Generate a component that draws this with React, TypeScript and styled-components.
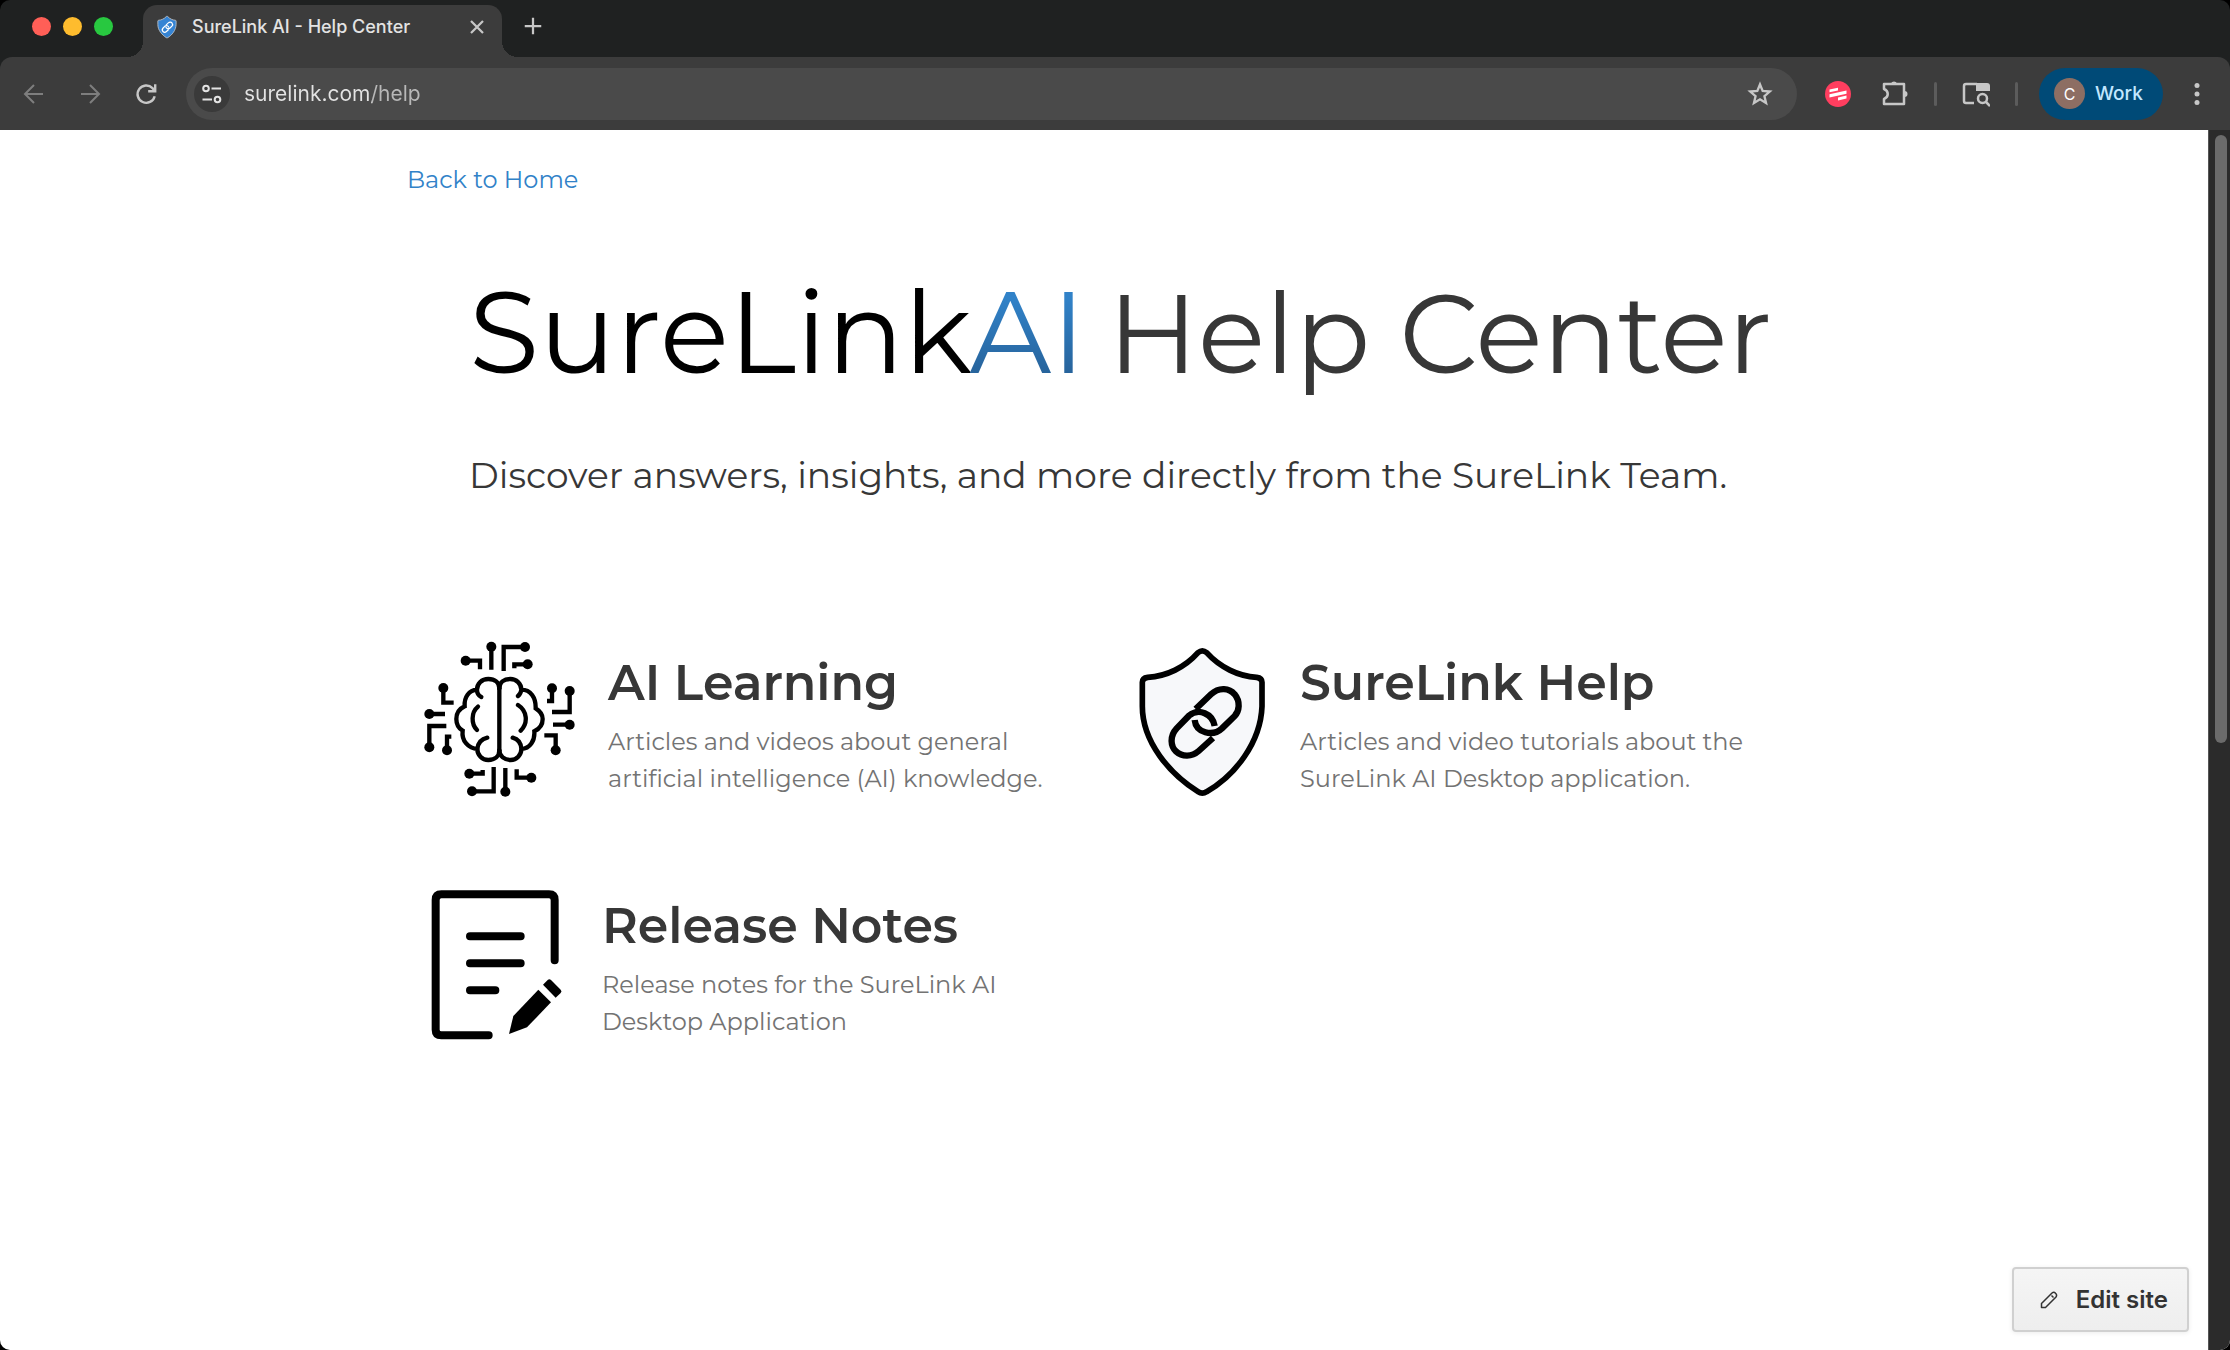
import React from "react";
import styled, { createGlobalStyle } from "styled-components";

const GlobalStyle = createGlobalStyle`
  *, *::before, *::after { box-sizing: border-box; }
  body { margin: 0; background: #000; font-family: Montserrat, Inter, "Liberation Sans", sans-serif; }
  button, input { font: inherit; }
`;

const Window = styled.div`
  display: flex;
  flex-direction: column;
  min-height: 100vh;
  border-radius: 10px;
  overflow: hidden;
  background: #1f2121;
`;

const TabStrip = styled.header`
  display: flex;
  align-items: flex-end;
  height: 57px;
  padding-left: 32px;
`;

const Lights = styled.div`
  display: flex;
  gap: 12px;
  width: 111px;
  height: 52px;
  padding-top: 12px;
`;

const Light = styled.button<{ $color: string }>`
  width: 19px;
  height: 19px;
  padding: 0;
  border: 0;
  border-radius: 50%;
  background: ${(p) => p.$color};
`;

const Tab = styled.div`
  position: relative;
  display: flex;
  align-items: center;
  width: 359px;
  height: 52px;
  padding: 0 12px 8px 14px;
  border-radius: 14px 14px 0 0;
  background: #3c3c3c;
  color: #e3e3e3;
  font: 500 18px/24px Inter, sans-serif;

  &::before,
  &::after {
    content: "";
    position: absolute;
    bottom: 0;
    width: 16px;
    height: 16px;
  }
  &::before {
    right: 100%;
    background: radial-gradient(circle at 0 0, transparent 16px, #3c3c3c 16px);
  }
  &::after {
    left: 100%;
    background: radial-gradient(circle at 100% 0, transparent 16px, #3c3c3c 16px);
  }
`;

const TabTitle = styled.span`
  flex: 1;
  margin-left: 15px;
  white-space: nowrap;
`;

const IconButton = styled.button<{ $size?: number; $dim?: boolean }>`
  display: flex;
  flex: none;
  align-items: center;
  justify-content: center;
  width: ${(p) => p.$size ?? 36}px;
  height: ${(p) => p.$size ?? 36}px;
  padding: 0;
  border: 0;
  border-radius: 50%;
  background: none;
  color: ${(p) => (p.$dim ? "#7e7e7e" : "#c7c7c7")};
`;

const NewTab = styled.div`
  display: flex;
  height: 52px;
  padding: 3px 0 0 13px;
`;

const Toolbar = styled.div`
  display: flex;
  align-items: center;
  height: 73px;
  padding: 0 15px 0 16px;
  border-radius: 12px 12px 0 0;
  background: #3c3c3c;
`;

const NavGroup = styled.nav`
  display: flex;
  gap: 20px;
  margin-right: 22px;
`;

const Address = styled.div`
  display: flex;
  flex: 1;
  align-items: center;
  height: 52px;
  padding: 0 19px 0 8px;
  border-radius: 26px;
  background: #4a4a4a;
`;

const SiteInfo = styled(IconButton)`
  background: #3a3a3a;
  color: #e3e3e3;
`;

const Url = styled.input`
  flex: 1;
  min-width: 0;
  margin-left: 14px;
  padding: 0;
  border: 0;
  outline: 0;
  color: #e3e3e3;
  background: linear-gradient(to right, #e3e3e3 128px, #b8b8b8 128px);
  background-clip: text;
  -webkit-background-clip: text;
  -webkit-text-fill-color: transparent;
  font: 400 21px/28px Inter, sans-serif;
`;

const Tools = styled.div`
  display: flex;
  align-items: center;
  gap: 21px;
  margin: 0 21px 0 23px;
`;

const Divider = styled.span`
  width: 3px;
  height: 24px;
  border-radius: 2px;
  background: #5c5c5c;
`;

const ProfileGroup = styled.div`
  display: flex;
  align-items: center;
  gap: 16px;
`;

const Profile = styled.button`
  display: flex;
  align-items: center;
  gap: 10px;
  width: 124px;
  height: 52px;
  padding: 0 0 0 15px;
  border: 0;
  border-radius: 26px;
  background: #004a77;
  color: #c2e7ff;
  font: 500 19px/24px Inter, sans-serif;
`;

const Avatar = styled.span`
  display: flex;
  align-items: center;
  justify-content: center;
  width: 31px;
  height: 31px;
  border-radius: 50%;
  background: #8d6e63;
  color: #fff;
  font-size: 16px;
  font-weight: 400;
`;

const Viewport = styled.div`
  display: flex;
  flex: 1;
  background: #fff;
`;

const Page = styled.main`
  position: relative;
  flex: 1;
`;

const Content = styled.div`
  width: 100%;
  max-width: 1394px;
  margin: 0 auto;
  padding-top: 32px;
`;

const BackLink = styled.a`
  display: inline-block;
  color: #3182c8;
  font-size: 24px;
  line-height: 36px;
  text-decoration: none;
`;

const Hero = styled.section`
  padding: 65px 0 0 62px;
  color: #373737;
  white-space: nowrap;
`;

const Title = styled.h1`
  display: flex;
  align-items: baseline;
  gap: 22px;
  margin: 0;
  font-size: 111px;
  font-weight: 400;
  line-height: 140px;
`;

const Brand = styled.span`
  color: #000;
  font-size: 114px;
`;

const BrandAccent = styled.span`
  background: linear-gradient(#3182c8 25%, #27639b 80%);
  background-clip: text;
  -webkit-background-clip: text;
  color: transparent;
`;

const Subtitle = styled.p`
  margin: 45px 0 0;
  font-size: 36px;
  line-height: 52px;
`;

const Cards = styled.section`
  display: grid;
  grid-template-columns: 1fr 1fr;
  row-gap: 43px;
  padding-top: 118px;
`;

const Card = styled.a`
  display: flex;
  align-items: center;
  gap: 8px;
  color: #737373;
  text-decoration: none;
`;

const CardBody = styled.div`
  padding-top: 12px;
`;

const CardTitle = styled.h2`
  margin: 0 0 10px;
  color: #373737;
  font-size: 49px;
  font-weight: 600;
  line-height: 60px;
`;

const CardText = styled.p`
  margin: 0;
  font-size: 24px;
  line-height: 37px;
`;

const ScrollTrack = styled.div`
  width: 22px;
  padding: 5px 4px 0 6px;
  border-left: 1px solid #555;
  background: #2b2b2b;
`;

const ScrollThumb = styled.div`
  width: 12px;
  height: 50%;
  border-radius: 6px;
  background: #6b6b6b;
`;

const EditButton = styled.button`
  position: absolute;
  right: 19px;
  bottom: 18px;
  display: flex;
  align-items: center;
  gap: 18px;
  height: 65px;
  padding: 0 19px 0 26px;
  border: 2px solid #d0d0d0;
  border-radius: 4px;
  background: linear-gradient(#f5f5f5, #eee);
  box-shadow: 0 1px 5px rgba(0, 0, 0, 0.08);
  color: #333;
  font: 600 24px/32px Inter, sans-serif;
`;

const Line = ({ size, d, width = 2 }: { size: number; d: string; width?: number }) => (
  <svg width={size} height={size} viewBox="0 0 24 24" fill="none" stroke="currentColor" strokeWidth={width} aria-hidden>
    <path d={d} />
  </svg>
);

const SHIELD =
  "M264 101Q277 90 290 101C330 145 385 172 440 175Q456 177 456 190V262C452 370 375 470 290 518Q277 527 264 518C180 465 97 370 97 262V190Q97 177 113 175C170 172 225 145 264 101Z";
const CHAIN =
  "M257 270L303 226C328 203 358 208 374 226C392 248 388 276 374 291L336 328C308 354 258 342 254 303M314 321C308 284 266 266 237 290L200 328C178 352 182 382 198 397C216 414 246 414 266 396L309 357";

const Favicon = () => (
  <svg width="20" height="24" viewBox="80 80 394 456" aria-hidden>
    <path d={SHIELD} fill="#3584d4" stroke="#b9bec4" strokeWidth="18" />
    <path d={CHAIN} fill="none" stroke="#fff" strokeWidth="24" />
  </svg>
);

const ShieldArt = () => (
  <svg width="188" height="200" viewBox="-18 0 564 600" aria-hidden>
    <path d={SHIELD} fill="#f7f8fa" stroke="#000" strokeWidth="17" />
    <path d={CHAIN} fill="none" stroke="#000" strokeWidth="19" />
  </svg>
);

const TRACES =
  "M197 125H240V151M274 83V152M375 84H311V156M383 136H343V148M130 207V251H161M88 285H135M88 385V321H139M141 394V353H154M456 208V246H441M509 216V279H456M509 317H459M467 394V349H433M208 464H248V453M216 517H281V444M316 518V447M394 476H350V451";
const NODES = [
  [197, 125], [274, 83], [375, 84], [383, 136], [130, 207], [88, 285], [88, 385], [141, 394],
  [456, 208], [509, 216], [509, 317], [467, 394], [208, 464], [216, 517], [316, 518], [394, 476],
];

const BrainArt = () => (
  <svg width="193" height="200" viewBox="21 0 579 600" fill="none" stroke="#000" aria-hidden>
    <path d={TRACES} strokeWidth="13" />
    {NODES.map(([x, y]) => (
      <circle key={`${x}-${y}`} cx={x} cy={y} r="15" fill="#000" stroke="none" />
    ))}
    <g strokeWidth="13" strokeLinecap="round">
      <path d="M298 208V394" />
      <path d="M298 208C298 190 284 180 265 180C245 180 231 194 231 212C231 222 236 230 244 234M231 212C207 214 192 234 194 262C177 270 169 285 169 300C169 316 176 328 188 335C184 365 205 389 233 390M298 394C298 412 284 423 265 423C246 423 232 408 232 390C234 372 244 360 262 356M234 263C213 280 213 315 231 333" />
      <path d="M298 208C298 190 312 180 331 180C349 180 364 194 364 212C363 220 360 226 354 231M364 212C392 212 408 236 407 268C420 276 428 287 428 300C428 316 418 330 403 337C405 365 390 389 364 390M298 394C298 412 314 423 332 423C350 423 364 408 364 390C363 372 354 360 338 356M354 258C382 276 385 312 362 335" />
    </g>
  </svg>
);

const NotesArt = () => (
  <svg width="187" height="200" viewBox="21 -21 561 600" aria-hidden>
    <g fill="none" stroke="#000" strokeWidth="24" strokeLinecap="round">
      <path d="M266 499H124Q107 499 107 482V93Q107 76 124 76H447Q464 76 464 93V274" />
      <path d="M210 202H362M210 283H362M210 364H286" />
    </g>
    <path d="M415 362L453 400L381 475L327 495L340 441Z" />
    <path d="M429 347L443 333Q448 329 453 333L482 362Q487 367 482 372L467 386Z" />
  </svg>
);

const cards = [
  { title: "AI Learning", lines: ["Articles and videos about general", "artificial intelligence (AI) knowledge."], Art: BrainArt },
  { title: "SureLink Help", lines: ["Articles and video tutorials about the", "SureLink AI Desktop application."], Art: ShieldArt },
  { title: "Release Notes", lines: ["Release notes for the SureLink AI", "Desktop Application"], Art: NotesArt },
];

export default function App() {
  return (
    <Window>
      <GlobalStyle />
      <TabStrip>
        <Lights>
          <Light $color="#ff5f57" aria-label="Close window" />
          <Light $color="#febc2e" aria-label="Minimize window" />
          <Light $color="#28c840" aria-label="Zoom window" />
        </Lights>
        <Tab>
          <Favicon />
          <TabTitle>SureLink AI - Help Center</TabTitle>
          <IconButton $size={26} aria-label="Close tab">
            <Line size={18} width={3} d="M4 4L20 20M20 4L4 20" />
          </IconButton>
        </Tab>
        <NewTab>
          <IconButton aria-label="New tab">
            <Line size={18} width={3} d="M12 1V23M1 12H23" />
          </IconButton>
        </NewTab>
      </TabStrip>

      <Toolbar>
        <NavGroup aria-label="History">
          <IconButton $dim aria-label="Back">
            <Line size={24} d="M21 12H4M12 3L3 12L12 21" />
          </IconButton>
          <IconButton $dim aria-label="Forward">
            <Line size={24} d="M3 12H20M12 3L21 12L12 21" />
          </IconButton>
          <IconButton aria-label="Reload">
            <svg width="26" height="26" viewBox="0 0 24 24" fill="none" stroke="currentColor" strokeWidth="2.2" aria-hidden>
              <path d="M20 14A8 8 0 1 1 18 6.6L20 9M20.500 3V9.500H14" />
            </svg>
          </IconButton>
        </NavGroup>
        <Address>
          <SiteInfo aria-label="Site information">
            <svg width="24" height="24" viewBox="0 0 24 24" fill="none" stroke="currentColor" strokeWidth="2" aria-hidden>
              <circle cx="6" cy="6.500" r="2.800" />
              <circle cx="17.500" cy="17.500" r="2.800" />
              <path d="M11.500 6.500H21M2.500 17.500H12" />
            </svg>
          </SiteInfo>
          <Url aria-label="Address" defaultValue="surelink.com/help" />
          <IconButton aria-label="Bookmark this page">
            <svg width="28" height="28" viewBox="0 0 24 24" fill="none" stroke="currentColor" strokeWidth="2" aria-hidden>
              <path d="M12 3.800L14.300 9.400L20.400 9.900L15.800 13.900L17.200 19.800L12 16.600L6.800 19.800L8.200 13.900L3.600 9.900L9.700 9.400Z" />
            </svg>
          </IconButton>
        </Address>
        <Tools>
          <IconButton aria-label="Recorder extension">
            <svg width="26" height="26" viewBox="0 0 26 26" aria-hidden>
              <circle cx="13" cy="13" r="13" fill="#ff3e5f" />
              <path d="M4.500 8.500L13 6.800V9.500L4.500 11.200ZM4.500 13.200L21.500 9.500V12.800L4.500 16.500ZM13 16.500L21.500 14.600V17.500L13 19.400Z" fill="#fff" />
            </svg>
          </IconButton>
          <IconButton aria-label="Extensions">
            <svg width="28" height="28" viewBox="0 0 28 28" fill="none" stroke="currentColor" strokeWidth="2.500" strokeLinejoin="round" aria-hidden>
              <path d="M3 4H23V24H3V19C8 17 8 11 3 9Z" />
              <path d="M10 3.500A3.200 3.200 0 0 1 16 3.500ZM23.500 11A3 3 0 0 1 23.500 17Z" fill="currentColor" stroke="none" />
            </svg>
          </IconButton>
          <Divider />
          <IconButton aria-label="Search this page">
            <svg width="28" height="28" viewBox="0 0 28 28" fill="none" stroke="currentColor" strokeWidth="2.500" aria-hidden>
              <path d="M12 23H4Q2 23 2 21V6Q2 4 4 4H15" />
              <path d="M14 3H25Q28 3 28 6V11H14Z" fill="currentColor" stroke="none" />
              <circle cx="20.500" cy="18.500" r="4.500" />
              <path d="M23.500 21.500L28 26" />
            </svg>
          </IconButton>
          <Divider />
        </Tools>
        <ProfileGroup>
          <Profile>
            <Avatar>C</Avatar>
            Work
          </Profile>
          <IconButton aria-label="Browser menu">
            <svg width="24" height="24" viewBox="0 0 24 24" fill="currentColor" aria-hidden>
              <circle cx="12" cy="3.500" r="2.500" />
              <circle cx="12" cy="12" r="2.500" />
              <circle cx="12" cy="20.500" r="2.500" />
            </svg>
          </IconButton>
        </ProfileGroup>
      </Toolbar>

      <Viewport>
        <Page>
          <Content>
            <BackLink href="#home">Back to Home</BackLink>
            <Hero>
              <Title>
                <Brand>
                  SureLink<BrandAccent>AI</BrandAccent>
                </Brand>
                <span>Help Center</span>
              </Title>
              <Subtitle>Discover answers, insights, and more directly from the SureLink Team.</Subtitle>
            </Hero>
            <Cards>
              {cards.map(({ title, lines, Art }) => (
                <Card key={title} href="#topic">
                  <Art />
                  <CardBody>
                    <CardTitle>{title}</CardTitle>
                    <CardText>
                      {lines[0]}
                      <br />
                      {lines[1]}
                    </CardText>
                  </CardBody>
                </Card>
              ))}
            </Cards>
          </Content>
          <EditButton>
            <svg width="18" height="18" viewBox="0 0 18 18" fill="none" stroke="currentColor" strokeWidth="1.500" strokeLinejoin="round" aria-hidden>
              <path d="M1.500 16.500V12.500L12 2Q14 0.500 15.500 2.200Q17.400 4 16 6L5.500 16.500ZM11.500 4.500L13.500 6.500" />
            </svg>
            Edit site
          </EditButton>
        </Page>
        <ScrollTrack>
          <ScrollThumb />
        </ScrollTrack>
      </Viewport>
    </Window>
  );
}
